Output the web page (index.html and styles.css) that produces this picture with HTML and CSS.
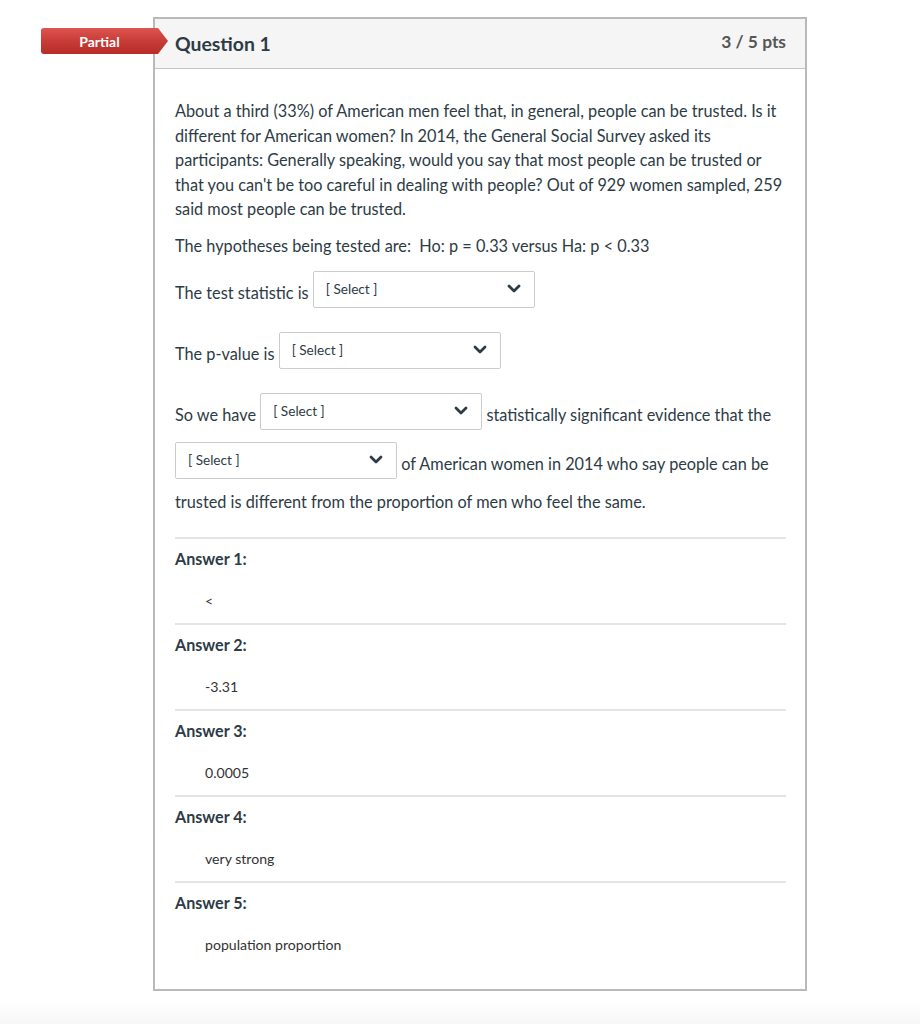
FILE: index.html
```html
<!DOCTYPE html>
<html lang="en">
<head>
<meta charset="utf-8">
<title>Question 1</title>
<link rel="stylesheet" href="styles.css">
</head>
<body>
<div class="page">
  <div class="question">
    <span class="badge">Partial</span>
    <div class="question-header">
      <h2 class="question-title">Question 1</h2>
      <span class="question-points">3 / 5 pts</span>
    </div>
    <div class="question-body">
      <p>About a third (33%) of American men feel that, in general, people can be trusted. Is it different for American women? In 2014, the General Social Survey asked its participants: Generally speaking, would you say that most people can be trusted or that you can't be too careful in dealing with people? Out of 929 women sampled, 259 said most people can be trusted.</p>
      <p>The hypotheses being tested are:&nbsp; Ho: p = 0.33 versus Ha: p &lt; 0.33</p>
      <p>The test statistic is <span class="select"><span class="select-text">[ Select ]</span><svg class="chevron" viewBox="0 0 14 10" width="14" height="10"><polyline points="2,2 7,7 12,2"/></svg></span></p>
      <p>The p-value is <span class="select"><span class="select-text">[ Select ]</span><svg class="chevron" viewBox="0 0 14 10" width="14" height="10"><polyline points="2,2 7,7 12,2"/></svg></span></p>
      <p>So we have <span class="select"><span class="select-text">[ Select ]</span><svg class="chevron" viewBox="0 0 14 10" width="14" height="10"><polyline points="2,2 7,7 12,2"/></svg></span> statistically significant evidence that the <span class="select"><span class="select-text">[ Select ]</span><svg class="chevron" viewBox="0 0 14 10" width="14" height="10"><polyline points="2,2 7,7 12,2"/></svg></span> of American women in 2014 who say people can be trusted is different from the proportion of men who feel the same.</p>

      <div class="answers">
        <div class="answer">
          <div class="answer-label">Answer 1:</div>
          <div class="answer-value">&lt;</div>
        </div>
        <div class="answer">
          <div class="answer-label">Answer 2:</div>
          <div class="answer-value">-3.31</div>
        </div>
        <div class="answer">
          <div class="answer-label">Answer 3:</div>
          <div class="answer-value">0.0005</div>
        </div>
        <div class="answer">
          <div class="answer-label">Answer 4:</div>
          <div class="answer-value">very strong</div>
        </div>
        <div class="answer">
          <div class="answer-label">Answer 5:</div>
          <div class="answer-value">population proportion</div>
        </div>
      </div>
    </div>
  </div>
  <div class="page-fade"></div>
</div>
</body>
</html>
```

FILE: styles.css
```css
html, body {
  margin: 0;
  padding: 0;
  background: #fff;
}

body {
  font-family: Lato, "Open Sans", "Liberation Sans", sans-serif;
  color: #2d3b45;
}

.page {
  padding: 17px 0 0 153px;
}

/* Question card */
.question {
  position: relative;
  width: 650px;
  border: 2px solid #b9b9b9;
  background: #fff;
}

.badge {
  position: absolute;
  left: -114px;
  top: 9px;
  width: 127px;
  height: 26px;
  box-sizing: border-box;
  padding-right: 10px;
  display: flex;
  align-items: center;
  justify-content: center;
  background: linear-gradient(to bottom, #dc5450 0%, #c73a35 55%, #b52d29 100%);
  clip-path: path('M3 0 H117 L127 13 L117 26 H3 Q0 26 0 23 V3 Q0 0 3 0 Z');
  color: #fff;
  font-size: 14px;
  font-weight: 700;
}

.question-header {
  height: 49px;
  display: flex;
  align-items: center;
  justify-content: space-between;
  padding: 0 19px 0 20px;
  background: #f5f5f5;
  border-bottom: 1px solid #c4c4c4;
}

.question-title {
  margin: 0;
  font-size: 19.4px;
  font-weight: 700;
  color: #2d3b45;
}

.question-points {
  font-size: 17.4px;
  font-weight: 700;
  color: #565656;
  margin-top: -4px;
}

.question-body {
  padding: 30px 19px 22px 20px;
  font-size: 16.3px;
  line-height: 24.5px;
}

.question-body p {
  margin: 0 0 12px;
}

/* Dropdown */
.select {
  display: inline-flex;
  align-items: center;
  justify-content: space-between;
  box-sizing: border-box;
  width: 222px;
  height: 37px;
  margin: 1px 0 11px;
  padding: 0 13px 2px 12px;
  vertical-align: middle;
  border: 1px solid #c7cdd1;
  border-radius: 2px;
  background: #fff;
  font-size: 13.6px;
  line-height: 18px;
  color: #2d3b45;
}

.chevron {
  fill: none;
  stroke: #2d3b45;
  stroke-width: 2.8;
  stroke-linecap: round;
  stroke-linejoin: round;
}

/* Answer list */
.answers {
  margin-top: 22px;
}

.answer {
  border-top: 2px solid #e4e4e4;
  padding: 8px 0 12px;
}

.answer-label {
  font-size: 16.1px;
  font-weight: 700;
  line-height: 24px;
}

.answer-value {
  margin-top: 20px;
  padding-left: 30px;
  font-size: 14.1px;
  line-height: 20px;
  color: #333;
}

.page-fade {
  height: 24px;
  margin: 10px 0 0 -153px;
  background: linear-gradient(to bottom, #fff, #f6f6f6);
}
```
